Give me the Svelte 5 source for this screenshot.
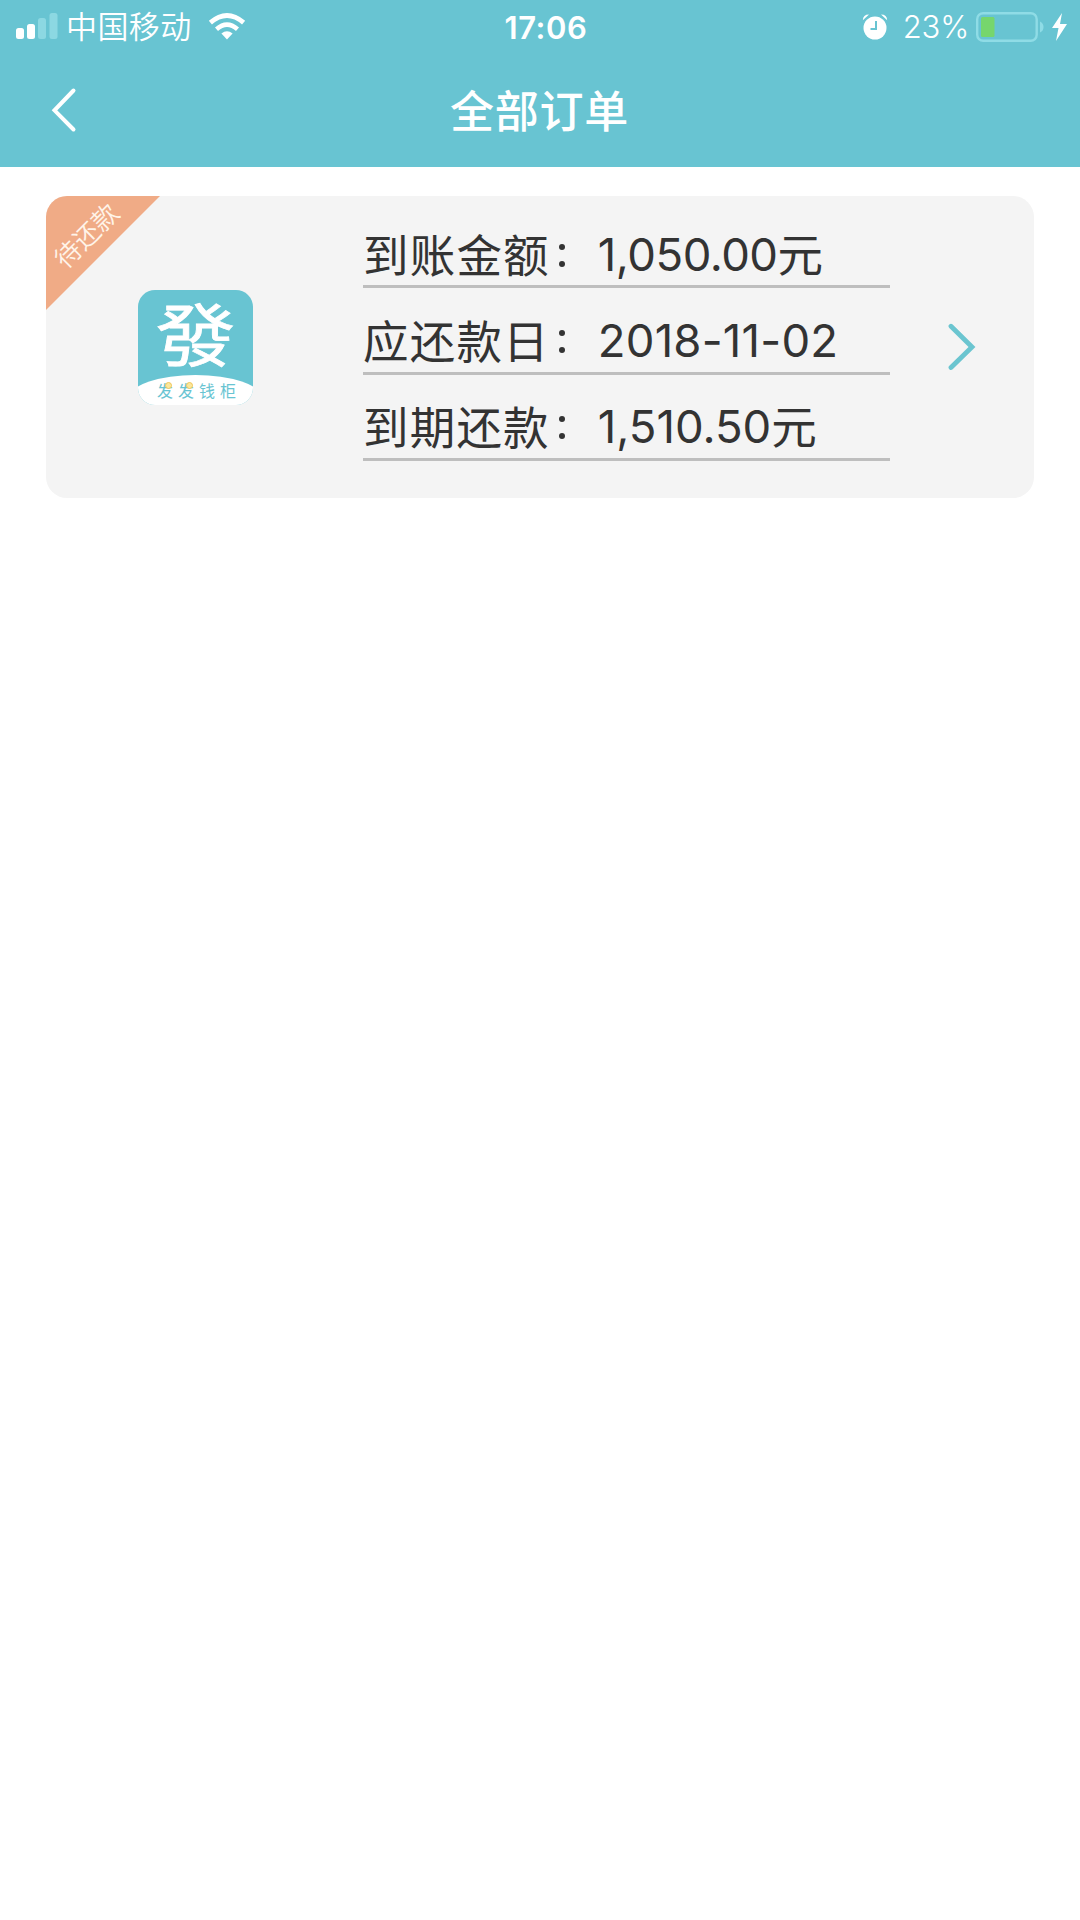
<script>
  const rows = [
    { label: '到账金额', value: '1,050.00', unit: '元', kind: 'received' },
    { label: '应还款日', value: '2018-11-02', unit: '', kind: 'date' },
    { label: '到期还款', value: '1,510.50', unit: '元', kind: 'due' }
  ];
</script>

<div class="screen">
  <header>
    <div class="status">
      <div class="side">
        <svg class="signal" width="44" height="28" viewBox="0 0 44 28">
          <rect x="1" y="15" width="8" height="11" rx="2.5" fill="#fff" />
          <rect x="12" y="11" width="8" height="15" rx="2.5" fill="#fff" />
          <rect x="23" y="5" width="8" height="21" rx="2.5" fill="#8cd8e2" />
          <rect x="34.5" y="0" width="8" height="26" rx="2.5" fill="#8cd8e2" />
        </svg>
        <span class="carrier">中国移动</span>
        <svg class="wifi" width="38" height="28" viewBox="0 0 38 28">
          <path d="M2.4 9.6Q19 -4.6 35.6 9.6" fill="none" stroke="#fff" stroke-width="4.8" />
          <path d="M8.5 16.2Q19 7 29.5 16.2" fill="none" stroke="#fff" stroke-width="4.6" />
          <path d="M13.4 20.6Q19 16 24.6 20.6L19 26.5Z" fill="#fff" />
        </svg>
      </div>
      <span class="time">17:06</span>
      <div class="side right">
        <svg class="alarm" width="26" height="26" viewBox="0 0 26 26">
          <circle cx="13" cy="14" r="11.5" fill="#fff" />
          <path d="M.8 6.2Q1 .6 7 .6ZM25.2 6.2Q25 .6 19 .6Z" fill="#fff" />
          <path d="M14 7V15H8.5" fill="none" stroke="#68c4d2" stroke-width="2" />
        </svg>
        <span class="percent">23%</span>
        <svg class="battery" width="68" height="30" viewBox="0 0 68 30">
          <rect x="1.2" y="1.2" width="59.5" height="27.6" rx="6" fill="none" stroke="#8fdce6" stroke-width="2.4" />
          <rect x="5" y="5" width="13.5" height="20" rx="1.5" fill="#76d66d" />
          <path d="M64 9.5Q67.5 11 67.5 15Q67.5 19 64 20.5Z" fill="#8fdce6" />
        </svg>
        <svg class="bolt" width="17" height="30" viewBox="0 0 17 30">
          <path d="M11 1L1 16H7.5L5 29L16 12H9Z" fill="#fff" />
        </svg>
      </div>
    </div>
    <div class="nav">
      <svg class="back" width="26" height="46" viewBox="0 0 26 46">
        <path d="M22.5 3.5L3.5 23.3L22.5 42.5" fill="none" stroke="#fff" stroke-width="4" stroke-linecap="round" />
      </svg>
      <h1>全部订单</h1>
    </div>
  </header>

  <main>
    <article class="card">
      <div class="ribbon"><span>待还款</span></div>
      <div class="logo">
        <div class="glyph">發</div>
        <div class="banner">
          <div class="brand">发发钱柜</div>
          <i class="coin first"></i>
          <i class="coin second"></i>
        </div>
      </div>
      <div class="details">
        {#each rows as row}
          <div class="row">
            <span class="label">{row.label}</span><span class="colon"><i></i><i></i></span><span class="value {row.kind}">{row.value}</span><span class="unit">{row.unit}</span>
          </div>
        {/each}
      </div>
      <svg class="more" width="28" height="48" viewBox="0 0 28 48">
        <path d="M3 3.3L24 24L3 44.5" fill="none" stroke="#6bc5d0" stroke-width="4.8" stroke-linecap="round" />
      </svg>
    </article>
  </main>
</div>

<style>
  :global(body) { background: #fff; }
  .screen {
    width: 1080px;
    height: 1920px;
    overflow: hidden;
    background: #fff;
    color: #333;
    font-family: Inter, "Noto Sans CJK SC", sans-serif;
  }
  header { height: 167px; background: #68c4d2; color: #fff; }
  svg { display: block; flex: none; }
  .status { height: 54px; display: grid; grid-template-columns: 1fr auto 1fr; align-items: center; }
  .side { display: flex; align-items: center; padding: 0 0 2px 15px; }
  .right { justify-content: flex-end; padding: 0 12px 2px 0; }
  .carrier { margin-left: 7px; font-size: 31px; line-height: 54px; font-weight: 350; letter-spacing: .4px; }
  .wifi { margin-left: 16px; }
  .time { font-size: 31px; line-height: 54px; font-weight: 600; letter-spacing: .6px; padding: 0 0 1px 12px; }
  .alarm { margin-right: 15px; }
  .percent { font-size: 31px; line-height: 54px; font-weight: 300; margin-right: 7px; letter-spacing: -.2px; }
  .bolt { margin-left: 7px; }
  .nav { height: 113px; display: grid; grid-template-columns: 50px 1fr 50px; padding: 0; }
  .back { margin: 33px 0 0 51px; }
  h1 { margin: 0 1px 0 0; text-align: center; font-size: 44px; line-height: 117px; font-weight: 500; letter-spacing: .8px; }
  main { padding: 29px 46px; }
  .card {
    height: 302px;
    border-radius: 21px;
    background: #f4f4f4;
    display: flex;
    position: relative;
    overflow: hidden;
  }
  .ribbon {
    position: absolute;
    left: 0;
    top: 0;
    width: 114px;
    height: 114px;
    background: #f0ab86;
    clip-path: polygon(0 0, 100% 0, 0 100%);
    color: #fff4e9;
  }
  .ribbon span {
    position: absolute;
    left: -9px;
    top: 20px;
    width: 100px;
    text-align: center;
    font-size: 26px;
    line-height: 40px;
    font-weight: 350;
    transform: rotate(-45deg);
  }
  .logo {
    box-sizing: border-box;
    width: 115px;
    height: 115px;
    margin: 94px 0 0 92px;
    padding-top: 7px;
    border-radius: 17px;
    overflow: hidden;
    background: #68c4d2;
    flex: none;
  }
  .glyph {
    height: 73px;
    line-height: 69px;
    text-align: center;
    font-family: "Noto Sans CJK TC", sans-serif;
    font-size: 68px;
    font-weight: 400;
    color: #fff;
    -webkit-text-stroke: .8px #fff;
    transform: scaleX(1.17);
  }
  .banner {
    position: relative;
    box-sizing: border-box;
    height: 34px;
    margin: 5px -8px 0;
    padding: 5px 8px 0 27px;
    border-radius: 50% 50% 0 0 / 22px 22px 0 0;
    background: #fff;
  }
  .brand {
    font-family: "Noto Sans CJK SC", sans-serif;
    font-size: 16px;
    line-height: 20px;
    letter-spacing: 5px;
    color: #68c4d2;
    white-space: nowrap;
  }
  .coin {
    position: absolute;
    top: 7px;
    width: 5px;
    height: 5px;
    border: 1.5px solid #efc559;
    border-radius: 50%;
    background: #fbe79c;
  }
  .first { left: 35px; }
  .second { left: 56px; }
  .details { width: 527px; margin: 6px 0 0 110px; }
  .row {
    box-sizing: border-box;
    height: 86.3px;
    border-bottom: 3px solid #bebebe;
    display: flex;
    font-size: 45.5px;
    line-height: 60px;
    padding-top: 22.5px;
    white-space: nowrap;
  }
  .label { letter-spacing: 1.2px; margin-top: -2px; font-family: "Noto Sans CJK SC", sans-serif; }
  .colon { width: 48px; display: flex; flex-direction: column; gap: 11px; padding: 19px 0 0 9px; box-sizing: border-box; }
  .colon i { width: 6px; height: 6px; border-radius: 50%; background: #333; }
  .received { letter-spacing: -.5px; }
  .date { letter-spacing: .2px; }
  .unit { margin-top: 1px; }
  .more { margin: 127px 0 0 58px; }
</style>
